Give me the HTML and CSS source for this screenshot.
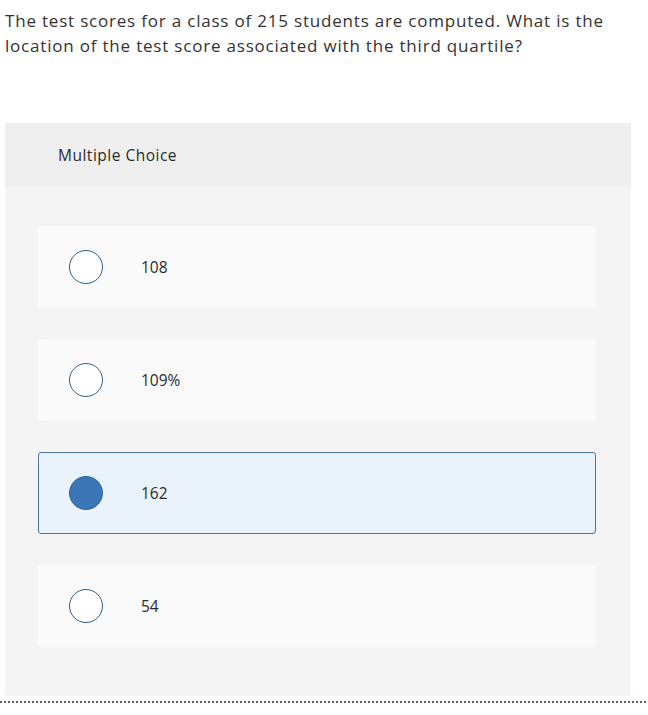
FILE: index.html
```html
<!DOCTYPE html>
<html>
<head>
<meta charset="utf-8">
<link rel="stylesheet" href="styles.css">
</head>
<body>
<div class="page">
  <p class="question">The test scores for a class of 215 students are computed. What is the location of the test score associated with the third quartile?</p>
  <div class="panel">
    <div class="panel-head">Multiple Choice</div>
    <div class="panel-body">
      <div class="option"><span class="radio"></span><span class="label">108</span></div>
      <div class="option"><span class="radio"></span><span class="label">109%</span></div>
      <div class="option selected"><span class="radio"></span><span class="label">162</span></div>
      <div class="option"><span class="radio"></span><span class="label">54</span></div>
    </div>
  </div>
  <div class="dots"></div>
</div>
</body>
</html>
```
FILE: styles.css
```css
html, body {
  margin: 0;
  padding: 0;
  background: #ffffff;
}
.page {
  font-family: "Open Sans", Lato, sans-serif;
  color: #333333;
  width: 648px;
  height: 715px;
  overflow: hidden;
}
.question {
  margin: 0;
  padding: 8px 0 0 5px;
  font-size: 17px;
  letter-spacing: 0.8px;
  line-height: 25px;
  width: 630px;
}
.panel {
  margin: 65px 0 0 5px;
  width: 626px;
  background: #f4f4f4;
}
.panel-head {
  height: 63px;
  background: #efefef;
  display: flex;
  align-items: center;
  padding-left: 53px;
  font-size: 15.5px;
  letter-spacing: 0.5px;
  color: #2b2b2b;
}
.panel-body {
  padding: 40px 0 49px 33px;
  display: flex;
  flex-direction: column;
  gap: 31px;
}
.option {
  width: 558px;
  height: 82px;
  box-sizing: border-box;
  background: #fafafa;
  border-radius: 3px;
  display: flex;
  align-items: center;
  padding-left: 31px;
}
.option.selected {
  background: #eaf3fc;
  border: 1px solid #4a76a0;
  padding-left: 30px;
}
.radio {
  width: 34px;
  height: 34px;
  box-sizing: border-box;
  border-radius: 50%;
  border: 1px solid #2f5f87;
  background: #ffffff;
  flex: none;
}
.option.selected .radio {
  background: #3b77b8;
  border-color: #2f639a;
}
.label {
  margin-left: 38px;
  font-size: 15.5px;
  color: #2b2b2b;
}
.dots {
  margin-top: 5px;
  height: 2px;
  background-image: linear-gradient(to right, #5a6470 50%, transparent 50%);
  background-size: 4px 2px;
}
```
